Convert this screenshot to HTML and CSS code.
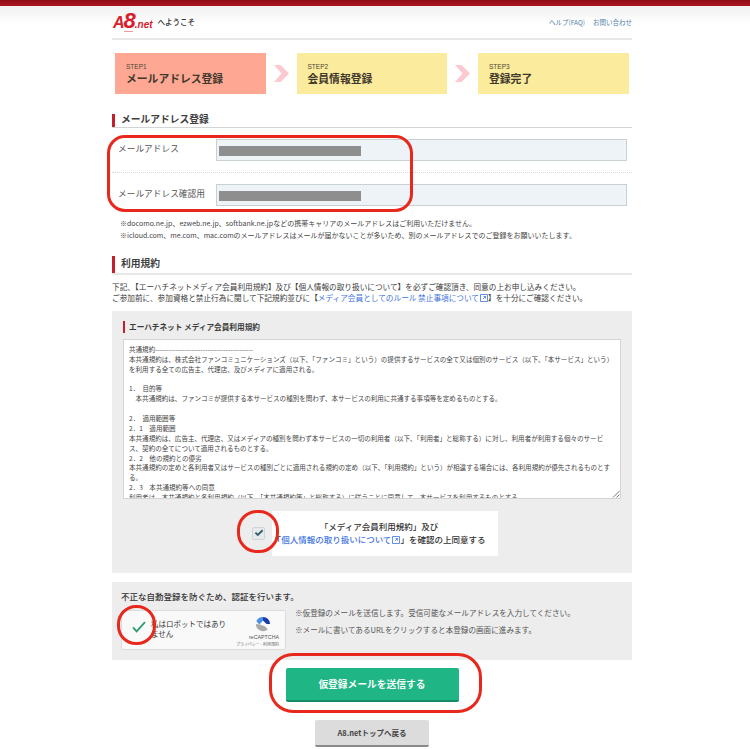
FILE: index.html
```html
<!DOCTYPE html>
<html lang="ja">
<head>
<meta charset="utf-8">
<title>A8.net メールアドレス登録</title>
<link rel="stylesheet" href="styles.css">
</head>
<body>
<div class="topbar"></div>
<div class="page">
  <header class="header">
    <div class="brand">
      <span class="logo"><span class="logo-a">A</span><span class="logo-8">8</span><span class="logo-net">.net</span><span class="logo-swoosh"></span></span>
      <span class="welcome">へようこそ</span>
    </div>
    <nav class="helplinks"><a>ヘルプ(FAQ)</a><a>お問い合わせ</a></nav>
  </header>

  <ol class="steps">
    <li class="step step-current"><small>STEP1</small><b>メールアドレス登録</b></li>
    <li class="chev"><svg width="15" height="19" viewBox="0 0 16 18"><path d="M0 0h7l9 9-9 9H0l8-9z" fill="#fcc9d0"/></svg></li>
    <li class="step"><small>STEP2</small><b>会員情報登録</b></li>
    <li class="chev"><svg width="15" height="19" viewBox="0 0 16 18"><path d="M0 0h7l9 9-9 9H0l8-9z" fill="#fcc9d0"/></svg></li>
    <li class="step"><small>STEP3</small><b>登録完了</b></li>
  </ol>

  <h2 class="section-title">メールアドレス登録</h2>
  <div class="field field-first">
    <label>メールアドレス</label>
    <div class="input"><span class="mask"></span></div>
  </div>
  <div class="field field-second">
    <label>メールアドレス確認用</label>
    <div class="input"><span class="mask"></span></div>
  </div>
  <p class="note note-a">※docomo.ne.jp、ezweb.ne.jp、softbank.ne.jpなどの携帯キャリアのメールアドレスはご利用いただけません。</p>
  <p class="note">※icloud.com、me.com、mac.comのメールアドレスはメールが届かないことが多いため、別のメールアドレスでのご登録をお願いいたします。</p>

  <h2 class="section-title section-terms">利用規約</h2>
  <p class="intro">下記、【エーハチネットメディア会員利用規約】及び【個人情報の取り扱いについて】を必ずご確認頂き、同意の上お申し込みください。<br>ご参加前に、参加資格と禁止行為に関して下記規約並びに【<a class="link">メディア会員としてのルール 禁止事項について<svg class="ext" width="8" height="8" viewBox="0 0 8 8"><path d="M.5.5h7v7h-7zM3 5l2.500-2.500M3.500 2.500h2v2" fill="none" stroke="#3f74e0" stroke-width=".8"/></svg></a>】を十分にご確認ください。</p>

  <section class="terms">
    <h3 class="terms-title">エーハチネット メディア会員利用規約</h3>
    <div class="terms-text">共通規約-------------------------------------------<br>本共通規約は、株式会社ファンコミュニケーションズ（以下、「ファンコミ」という）の提供するサービスの全て又は個別のサービス（以下、「本サービス」という）<br>を利用する全ての広告主、代理店、及びメディアに適用される。<br><br>1．　目的等<br>　本共通規約は、ファンコミが提供する本サービスの種別を問わず、本サービスの利用に共通する事項等を定めるものとする。<br><br>2．　適用範囲等<br>2．1　適用範囲<br>本共通規約は、広告主、代理店、又はメディアの種別を問わず本サービスの一切の利用者（以下、「利用者」と総称する）に対し、利用者が利用する個々のサービ<br>ス、契約の全てについて適用されるものとする。<br>2．2　他の規約との優劣<br>本共通規約の定めと各利用者又はサービスの種別ごとに適用される規約の定め（以下、「利用規約」という）が相違する場合には、各利用規約が優先されるものとす<br>る。<br>2．3　本共通規約等への同意<br>利用者は、本共通規約と各利用規約（以下、「本共通規約等」と総称する）に従うことに同意して、本サービスを利用するものとする。<svg class="grip" width="8" height="8" viewBox="0 0 8 8"><path d="M1 7.500 7.500 1M4.500 7.500l3-3" stroke="#777" fill="none"/></svg></div>
    <div class="agree">
      <span class="checkbox"><svg width="10" height="8" viewBox="0 0 12 10"><path d="M1.500 4.500 4.500 7.500 10.500 1.500" fill="none" stroke="#33606e" stroke-width="2.400"/></svg></span>
      <p>「メディア会員利用規約」及び<br>「<a class="link">個人情報の取り扱いについて<svg class="ext" width="8" height="8" viewBox="0 0 8 8"><path d="M.5.5h7v7h-7zM3 5l2.500-2.500M3.500 2.500h2v2" fill="none" stroke="#3f74e0" stroke-width=".8"/></svg></a>」を確認の上同意する</p>
    </div>
  </section>

  <section class="auth">
    <h3 class="auth-title">不正な自動登録を防ぐため、認証を行います。</h3>
    <div class="auth-row">
      <div class="recaptcha">
        <svg class="rc-check" width="16" height="12" viewBox="0 0 18 15"><path d="M1.500 8 6 13 16.500 1.500" fill="none" stroke="#2c9b6b" stroke-width="2.200"/></svg>
        <span class="rc-label">私はロボットではありません</span>
        <div class="rc-brand">
          <svg width="16" height="16" viewBox="0 0 18 18"><path d="M9 1a8 8 0 0 1 8 8h-4L9 5z" fill="#1c3aa9"/><path d="M9 1a8 8 0 0 0-7.500 5L5 9.500 9 5z" fill="#4a90e2"/><path d="M1 9a8 8 0 0 0 13.500 5.800L11 11.500 5.500 9.500z" fill="#aaa"/></svg>
          <span class="rc-name">reCAPTCHA</span>
          <span class="rc-terms">プライバシー - 利用規約</span>
        </div>
      </div>
      <div class="auth-notes">
        <p>※仮登録のメールを送信します。受信可能なメールアドレスを入力してください。</p>
        <p>※メールに書いてあるURLをクリックすると本登録の画面に進みます。</p>
      </div>
    </div>
  </section>

  <div class="actions">
    <a class="btn-primary">仮登録メールを送信する</a>
    <a class="btn-back">A8.netトップへ戻る</a>
  </div>
</div>

<span class="ring ring-fields"></span>
<span class="ring ring-check"></span>
<span class="ring ring-robot"></span>
<span class="ring ring-submit"></span>
</body>
</html>
```
FILE: styles.css
```css
* { box-sizing: border-box; }
html, body { margin: 0; padding: 0; }
body {
  position: relative;
  height: 750px;
  overflow: hidden;
  background: #fff;
  color: #3c3c3c;
  font-family: "Noto Sans CJK JP", "Liberation Sans", sans-serif;
  font-size: 8px;
  background-image: linear-gradient(#ececec, #fff);
  background-size: 100% 24px;
  background-repeat: no-repeat;
}
p, h2, h3, ol { margin: 0; padding: 0; }
.topbar { height: 6px; background: linear-gradient(#8e0c15, #b0141f); }
.page { width: 520px; margin: 0 auto 0 112px; }

.header {
  height: 34px;
  display: flex;
  justify-content: space-between;
  align-items: center;
  border-bottom: 2px solid #e8e8e8;
  padding: 7px 0 8px;
}
.brand { display: flex; align-items: center; gap: 5px; }
.logo {
  position: relative;
  display: flex;
  align-items: baseline;
  margin-left: 1px;
  color: #d8202c;
  font-family: "Liberation Sans", sans-serif;
  font-style: italic;
  font-weight: 700;
}
.logo-a { font-size: 16px; line-height: 18px; }
.logo-8 { font-size: 22px; line-height: 18px; margin-left: -1px; }
.logo-net { font-size: 10px; line-height: 10px; margin-left: -1px; }
.logo-swoosh { position: absolute; left: 11px; top: 19px; width: 9px; height: 1px; background: #eb9aa0; }
.welcome { font-size: 7.500px; font-weight: 500; color: #333; }
.helplinks { display: flex; gap: 8px; font-size: 6.500px; color: #4f7da6; }

.steps { list-style: none; display: flex; align-items: center; margin: 13px 3px 0; height: 41px; }
.step { width: 150.500px; height: 41px; background: #fbeb9c; padding: 10px 11px 0; display: flex; flex-direction: column; }
.step-current { background: #fea893; }
.step small { font-size: 6.500px; line-height: 8px; color: #4d4533; font-family: "Liberation Sans", sans-serif; }
.step b { font-size: 10.800px; line-height: 14px; font-weight: 700; color: #40382c; }
.chev { width: 31px; display: flex; justify-content: center; }

.section-title {
  margin-top: 20px;
  height: 14px;
  font-size: 9.750px;
  line-height: 11px;
  font-weight: 700;
  color: #3f3f3f;
  border-bottom: 1px solid #d4d4d4;
  padding-left: 9px;
  background: linear-gradient(#c4202c, #c4202c) no-repeat 0 0 / 3px 13px;
}
.section-terms { margin-top: 15px; height: 19px; line-height: 15px; border-bottom: 2px solid #e8e8e8; background-size: 3px 17px; }

.field { display: flex; padding: 11px 5px 0 6px; }
.field-first { height: 45px; border-bottom: 1px dotted #d8d8d8; }
.field-second { height: 33px; }
.field label { width: 98px; font-size: 8.700px; line-height: 20px; color: #555; }
.input { flex: 1; height: 21.500px; background: #edf3f6; border: 1px solid #c8d0d4; padding: 6px 2px 0; }
.mask { display: block; width: 142px; height: 10px; background: #8e8e8e; }
.note { font-size: 7px; line-height: 12.200px; color: #444; padding-left: 8px; white-space: nowrap; }
.note-a { margin-top: 11px; }

.intro { font-size: 7.650px; line-height: 10.500px; color: #3c3c3c; margin-top: 7px; white-space: nowrap; }
.link { color: #3f74e0; }
.ext { margin-left: 1px; vertical-align: -1px; }

.terms { margin-top: 8px; height: 262px; background: #ededed; padding: 10px 11px 0; display: flex; flex-direction: column; }
.terms-title { font-size: 7.650px; line-height: 12px; font-weight: 700; color: #3a3a3a; border-left: 2px solid #c4202c; padding-left: 4px; }
.terms-text {
  position: relative;
  margin-top: 5.500px;
  height: 160px;
  overflow: hidden;
  background: #fff;
  border: 1px solid #d4d4d4;
  padding: 5px 5px 0;
  font-size: 6.550px;
  line-height: 9.870px;
  color: #444;
  white-space: nowrap;
}
.grip { position: absolute; right: 0; bottom: 0; }
.agree { display: flex; align-items: center; gap: 7px; margin: 12px 0 0 129px; height: 45px; }
.checkbox {
  flex: none;
  width: 13px;
  height: 13px;
  background: #e6eaec;
  border: 1px solid #cfd4d6;
  border-radius: 2px;
  display: flex;
  align-items: center;
  justify-content: center;
}
.agree p {
  width: 226px;
  height: 45px;
  background: #fff;
  padding: 9px 12px 0 0;
  text-align: center;
  font-size: 8.500px;
  line-height: 13.300px;
  font-weight: 500;
  color: #333;
  white-space: nowrap;
}

.auth { margin-top: 9px; height: 77.500px; background: #ededed; padding: 8px 9px 0; }
.auth-title { font-size: 8.500px; line-height: 12px; font-weight: 500; color: #333; }
.auth-row { display: flex; gap: 9px; margin-top: 8px; }
.recaptcha {
  position: relative;
  flex: none;
  display: flex;
  width: 165px;
  height: 40px;
  padding-left: 9px;
  background: #f9f9f9;
  border: 1px solid #dcdcdc;
  border-radius: 2px;
}
.rc-check { margin-top: 10px; flex: none; }
.rc-label { width: 78px; margin: 8px 0 0 4px; font-size: 7.500px; line-height: 10px; color: #333; }
.rc-brand { position: absolute; right: 6px; top: 5px; display: flex; flex-direction: column; align-items: flex-end; }
.rc-brand svg { margin-right: 8px; }
.rc-name { font-size: 5.300px; line-height: 7px; margin-top: 1.500px; font-family: "Liberation Sans", sans-serif; color: #555; }
.rc-terms { font-size: 4px; line-height: 7px; color: #666; white-space: nowrap; }
.auth-notes { margin-top: -3px; font-size: 7.600px; line-height: 11px; color: #555; }
.auth-notes p { margin-bottom: 6px; white-space: nowrap; }

.actions { display: flex; flex-direction: column; align-items: center; }
.btn-primary {
  margin-top: 8.500px;
  width: 173px;
  height: 34px;
  background: #1fb585;
  border-bottom: 2px solid #128a63;
  border-radius: 2px;
  color: #f4fbf8;
  font-size: 9.750px;
  font-weight: 700;
  line-height: 32px;
  text-align: center;
}
.btn-back {
  margin-top: 18px;
  width: 114px;
  height: 27px;
  background: #dcdcdc;
  border-bottom: 2px solid #8a8a8a;
  border-radius: 2px;
  color: #444;
  font-size: 7.500px;
  font-weight: 700;
  line-height: 25px;
  text-align: center;
}

.ring { position: absolute; border: 3px solid #e8281c; pointer-events: none; }
.ring-fields { left: 107px; top: 135px; width: 306px; height: 77px; border-radius: 18px; }
.ring-check { left: 237px; top: 510px; width: 42px; height: 43px; border-radius: 20px; }
.ring-robot { left: 117px; top: 605px; width: 39px; height: 40px; border-radius: 19px; }
.ring-submit { left: 269px; top: 653px; width: 213px; height: 60px; border-radius: 24px; }
```
